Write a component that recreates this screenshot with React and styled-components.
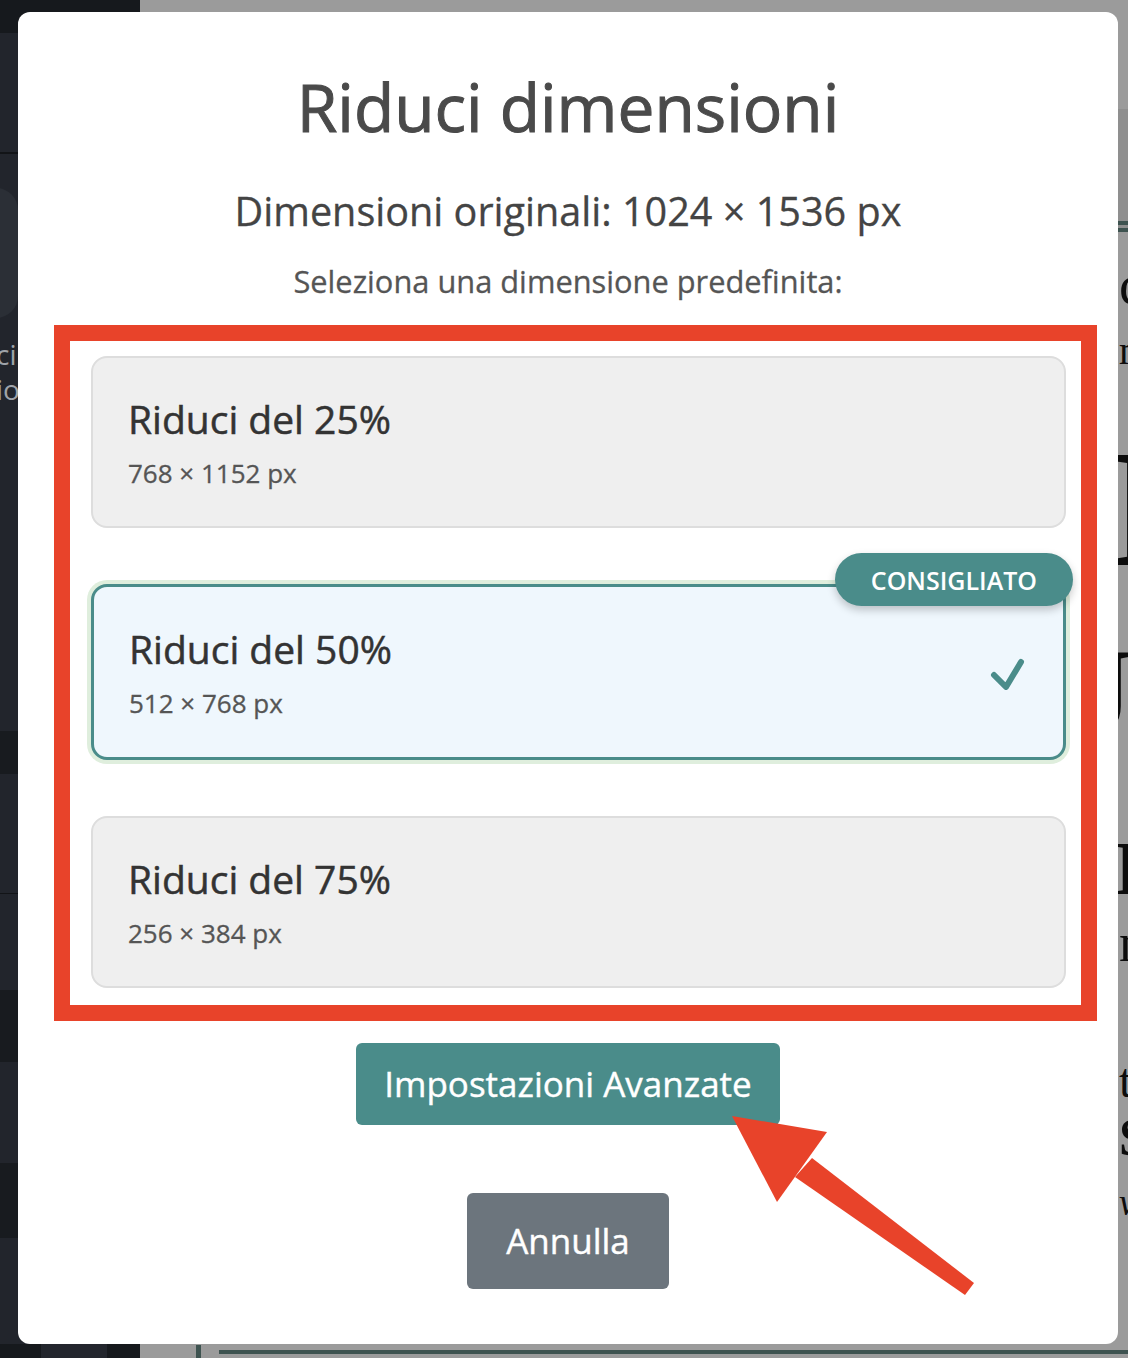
import React from "react";
import styled, { createGlobalStyle } from "styled-components";

const GlobalStyle = createGlobalStyle`
  *, *::before, *::after { box-sizing: border-box; }
  html, body {
    margin: 0;
    padding: 0;
    width: 1128px;
    height: 1358px;
    overflow: hidden;
  }
  body {
    font-family: "Open Sans", "Noto Sans", sans-serif;
    background: #9b9b9b;
  }
`;

const Page = styled.div`
  display: flex;
  width: 1128px;
  height: 1358px;
  overflow: hidden;
`;

/* ---------- dimmed background app ---------- */
const Sidebar = styled.aside`
  width: 140px;
  flex: none;
  display: flex;
  flex-direction: column;
  background: #22252c;
  overflow: hidden;
`;

const toneColors = {
  top: "#16191d",
  base: "#22252c",
  band: "#181b1f",
  rule: "#121417",
};

const SideSegment = styled.div`
  flex: none;
  height: ${(p) => p.$h}px;
  background: ${(p) => toneColors[p.$tone]};
  display: flex;
  flex-direction: column;
`;

const SidePanel = styled.div`
  margin: 34px 0 0 -40px;
  width: 58px;
  height: 130px;
  border-radius: 22px;
  background: #2b2f36;
`;

const SideLabel = styled.div`
  margin: 19px 0 0 -4px;
  font-size: 28px;
  line-height: 35px;
  color: #9fa3a9;
  white-space: nowrap;
`;

const SideFoot = styled.div`
  flex: 1;
  display: flex;
  background: #16191d;
`;

const SideFootTab = styled.div`
  margin-left: 41px;
  width: 66px;
  background: #23262d;
`;

const Main = styled.main`
  flex: 1;
  display: flex;
  flex-direction: column;
  background: #9b9b9b;
`;

const DocHeader = styled.header`
  margin-top: 109px;
  height: 123px;
  background: #8f8f8f;
  border-bottom: 11px double #3e5350;
`;

const DocColumn = styled.div`
  display: flex;
  flex-direction: column;
  padding-left: 979px;
`;

const DocLine = styled.div`
  margin-top: ${(p) => p.$mt}px;
  margin-left: ${(p) => p.$dx || 0}px;
  font-family: "Liberation Serif", "DejaVu Serif", serif;
  font-size: ${(p) => p.$fs}px;
  line-height: ${(p) => p.$fs}px;
  height: ${(p) => p.$fs}px;
  font-weight: ${(p) => (p.$bold ? 700 : 400)};
  font-style: ${(p) => (p.$italic ? "italic" : "normal")};
  color: #0d0d0d;
  white-space: nowrap;
`;

const DocFrame = styled.div`
  margin: auto 0 0 56px;
  height: 13px;
  border-left: 5px solid #3e5350;
  padding: 5px 0 0 18px;
`;

const DocFrameRule = styled.div`
  border-top: 4px solid #3e5350;
`;

/* ---------- modal ---------- */
const Overlay = styled.div`
  position: fixed;
  inset: 0;
  display: flex;
  padding: 12px 10px 14px 18px;
`;

const Modal = styled.section`
  flex: 1;
  display: flex;
  flex-direction: column;
  align-items: center;
  padding-top: 56px;
  background: #ffffff;
  border-radius: 12px;
  -webkit-text-stroke: 0.3px currentColor;
`;

const Title = styled.h1`
  margin: 0;
  font-size: 65.8px;
  line-height: 78px;
  font-weight: 400;
  color: #4a4a4a;
  -webkit-text-stroke: 1px #4a4a4a;
`;

const Original = styled.p`
  margin: 41px 0 0;
  font-size: 39.6px;
  line-height: 48px;
  color: #444444;
`;

const Prompt = styled.p`
  margin: 28px 0 0;
  font-size: 30.8px;
  line-height: 36px;
  color: #555555;
`;

const Highlight = styled.div`
  align-self: stretch;
  margin: 26px 21px 0 36px;
  border: 16px solid #e8432a;
  padding: 15px 15px 17px 21px;
  display: flex;
  flex-direction: column;
  gap: 56px;
`;

const OptionCard = styled.div`
  position: relative;
  display: flex;
  align-items: center;
  justify-content: space-between;
  padding: ${(p) => (p.$selected ? "38px 38px 38px 35px" : "37px 38px 37px 35px")};
  border-radius: 16px;
  border: ${(p) => (p.$selected ? "3px solid #4a8c8a" : "2px solid #dddddd")};
  background: ${(p) => (p.$selected ? "#eff7fd" : "#efefef")};
  box-shadow: ${(p) => (p.$selected ? "0 0 0 4px #dfeedd" : "none")};
`;

const OptionText = styled.div`
  display: flex;
  flex-direction: column;
  gap: 16px;
`;

const OptionTitle = styled.div`
  font-size: 39px;
  line-height: 47px;
  color: #333333;
  -webkit-text-stroke: 0.5px #333333;
`;

const OptionSize = styled.div`
  font-size: 26px;
  line-height: 31px;
  color: #555555;
`;

const Badge = styled.span`
  position: absolute;
  top: -34px;
  right: -10px;
  height: 53px;
  padding: 0 36px;
  display: flex;
  align-items: center;
  border-radius: 27px;
  background: #4a8c8a;
  color: #ffffff;
  font-size: 25px;
  font-weight: 600;
  -webkit-text-stroke: 0;
  box-shadow: 0 4px 8px rgba(0, 0, 0, 0.22);
`;

const CheckMark = styled.svg`
  flex: none;
  margin-top: 4px;
`;

const Button = styled.button`
  margin-top: ${(p) => p.$mt}px;
  padding: ${(p) => p.$pad};
  border: none;
  border-radius: 6px;
  background: ${(p) => p.$bg};
  color: #ffffff;
  font-family: inherit;
  font-size: 35px;
  line-height: 42px;
  -webkit-text-stroke: 0.4px #ffffff;
  cursor: pointer;
`;

const ArrowLayer = styled.svg`
  position: fixed;
  top: 0;
  left: 0;
  width: 1128px;
  height: 1358px;
  pointer-events: none;
`;

const CheckIcon = () => (
  <CheckMark width="36" height="32" viewBox="0 0 36 32" aria-hidden="true">
    <path
      d="M5 17 L17 29 L32 4"
      fill="none"
      stroke="#4a8c8a"
      strokeWidth="6"
      strokeLinecap="round"
      strokeLinejoin="round"
    />
  </CheckMark>
);

const sidebar = [
  { h: 33, tone: "top" },
  { h: 119, tone: "base" },
  { h: 2, tone: "rule" },
  { h: 577, tone: "base", content: true },
  { h: 43, tone: "band" },
  { h: 119, tone: "base" },
  { h: 1, tone: "rule" },
  { h: 96, tone: "base" },
  { h: 72, tone: "band" },
  { h: 101, tone: "base" },
  { h: 75, tone: "band" },
  { h: 106, tone: "base" },
];

const docLines = [
  { t: "co", fs: 56, mt: 25 },
  { t: "ma", fs: 40, mt: 18 },
  { t: "D", fs: 168, mt: 53, bold: true, dx: -9 },
  { t: "J", fs: 120, mt: 40, bold: true, dx: -46 },
  { t: "D", fs: 76, mt: 78, bold: true, dx: -4 },
  { t: "n", fs: 54, mt: 10 },
  { t: "t", fs: 48, mt: 87 },
  { t: "S", fs: 52, mt: 7, bold: true },
  { t: "v", fs: 38, mt: 19, italic: true },
];

const options = [
  { title: "Riduci del 25%", size: "768 × 1152 px" },
  { title: "Riduci del 50%", size: "512 × 768 px", selected: true },
  { title: "Riduci del 75%", size: "256 × 384 px" },
];

export default function App() {
  return (
    <>
      <GlobalStyle />
      <Page>
        <Sidebar>
          {sidebar.map((s, i) => (
            <SideSegment key={i} $h={s.h} $tone={s.tone}>
              {s.content && (
                <>
                  <SidePanel />
                  <SideLabel>
                    ci
                    <br />
                    io
                  </SideLabel>
                </>
              )}
            </SideSegment>
          ))}
          <SideFoot>
            <SideFootTab />
          </SideFoot>
        </Sidebar>
        <Main>
          <DocHeader />
          <DocColumn>
            {docLines.map((l, i) => (
              <DocLine
                key={i}
                $fs={l.fs}
                $mt={l.mt}
                $dx={l.dx}
                $bold={l.bold}
                $italic={l.italic}
              >
                {l.t}
              </DocLine>
            ))}
          </DocColumn>
          <DocFrame>
            <DocFrameRule />
          </DocFrame>
        </Main>
      </Page>

      <Overlay>
        <Modal>
          <Title>Riduci dimensioni</Title>
          <Original>Dimensioni originali: 1024 × 1536 px</Original>
          <Prompt>Seleziona una dimensione predefinita:</Prompt>
          <Highlight>
            {options.map((o) => (
              <OptionCard key={o.title} $selected={o.selected}>
                <OptionText>
                  <OptionTitle>{o.title}</OptionTitle>
                  <OptionSize>{o.size}</OptionSize>
                </OptionText>
                {o.selected && (
                  <>
                    <CheckIcon />
                    <Badge>CONSIGLIATO</Badge>
                  </>
                )}
              </OptionCard>
            ))}
          </Highlight>
          <Button $mt={22} $pad="20px 28px" $bg="#4a8c8a">
            Impostazioni Avanzate
          </Button>
          <Button $mt={68} $pad="27px 39px" $bg="#6c757d">
            Annulla
          </Button>
        </Modal>
      </Overlay>

      <ArrowLayer viewBox="0 0 1128 1358" aria-hidden="true">
        <polygon points="732,1116 827,1132 777,1202" fill="#e8432a" />
        <polygon points="812,1158 974,1283 965,1295 795,1177" fill="#e8432a" />
      </ArrowLayer>
    </>
  );
}
